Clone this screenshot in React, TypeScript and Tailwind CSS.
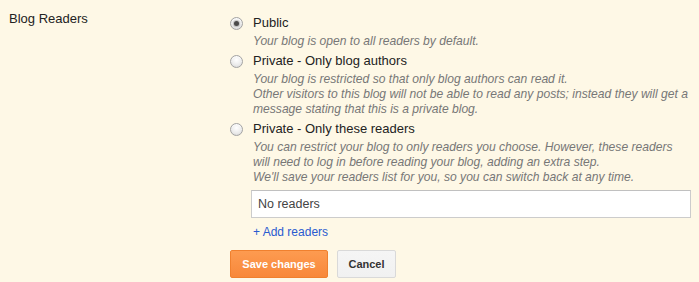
import React from "react";

function Radio({ checked }: { checked?: boolean }) {
  return (
    <span className="relative mt-[1px] flex h-[13px] w-[13px] shrink-0 items-center justify-center rounded-full border border-[#a3a3a3] bg-[radial-gradient(circle_at_50%_35%,#ffffff_0%,#ececec_55%,#d3d3d3_100%)] shadow-[inset_0_1px_1px_rgba(255,255,255,0.8)]">
      {checked && (
        <span className="h-[5px] w-[5px] rounded-full bg-[#4a4a4a] shadow-[0_0_1px_1px_rgba(90,90,90,0.35)]" />
      )}
    </span>
  );
}

function Option({
  label,
  checked,
  lines,
}: {
  label: string;
  checked?: boolean;
  lines: string[];
}) {
  return (
    <div>
      <div className="flex h-[16px] items-center gap-[10px]">
        <Radio checked={checked} />
        <span className="text-[13px] leading-[16px] text-[#222]">{label}</span>
      </div>
      <div className="mt-[3px] pl-[23px] text-[12.1px] italic leading-[15px] text-[#777] whitespace-nowrap">
        {lines.map((l, i) => (
          <div key={i}>{l}</div>
        ))}
      </div>
    </div>
  );
}

export default function App() {
  return (
    <div
      className="flex h-[282px] w-full bg-[#fef8e6] text-[13px]"
      style={{ fontFamily: '"Liberation Sans", Arial, sans-serif' }}
    >
      <div className="w-[230px] shrink-0 pl-[9px] pt-[11px] text-[13px] leading-[16px] text-[#222]">
        Blog Readers
      </div>
      <div className="flex flex-col pt-[15px]">
        <div className="flex flex-col gap-[4px]">
          <Option
            label="Public"
            checked
            lines={["Your blog is open to all readers by default."]}
          />
          <Option
            label="Private - Only blog authors"
            lines={[
              "Your blog is restricted so that only blog authors can read it.",
              "Other visitors to this blog will not be able to read any posts; instead they will get a",
              "message stating that this is a private blog.",
            ]}
          />
          <Option
            label="Private - Only these readers"
            lines={[
              "You can restrict your blog to only readers you choose. However, these readers",
              "will need to log in before reading your blog, adding an extra step.",
              "We'll save your readers list for you, so you can switch back at any time.",
            ]}
          />
        </div>
        <div className="ml-[21px] mt-[5px] flex h-[28px] w-[440px] items-center border border-[#cccccc] border-t-[#c0c0c0] bg-white pl-[6px] text-[12.5px] text-[#444]">
          No readers
        </div>
        <div className="ml-[23px] mt-[6px] h-[16px] text-[12px] leading-[16px] text-[#2a5bd0]">
          + Add readers
        </div>
        <div className="mt-[10px] flex gap-[9px]">
          <button className="h-[28px] w-[98px] rounded-[2px] border border-[#f0802e] bg-gradient-to-b from-[#fd9b50] to-[#f8883a] text-[11px] font-bold text-white">
            Save changes
          </button>
          <button className="h-[28px] w-[59px] rounded-[2px] border border-[#d9d9d9] bg-gradient-to-b from-[#f5f5f5] to-[#f1f1f1] text-[11px] font-bold text-[#333]">
            Cancel
          </button>
        </div>
      </div>
    </div>
  );
}
